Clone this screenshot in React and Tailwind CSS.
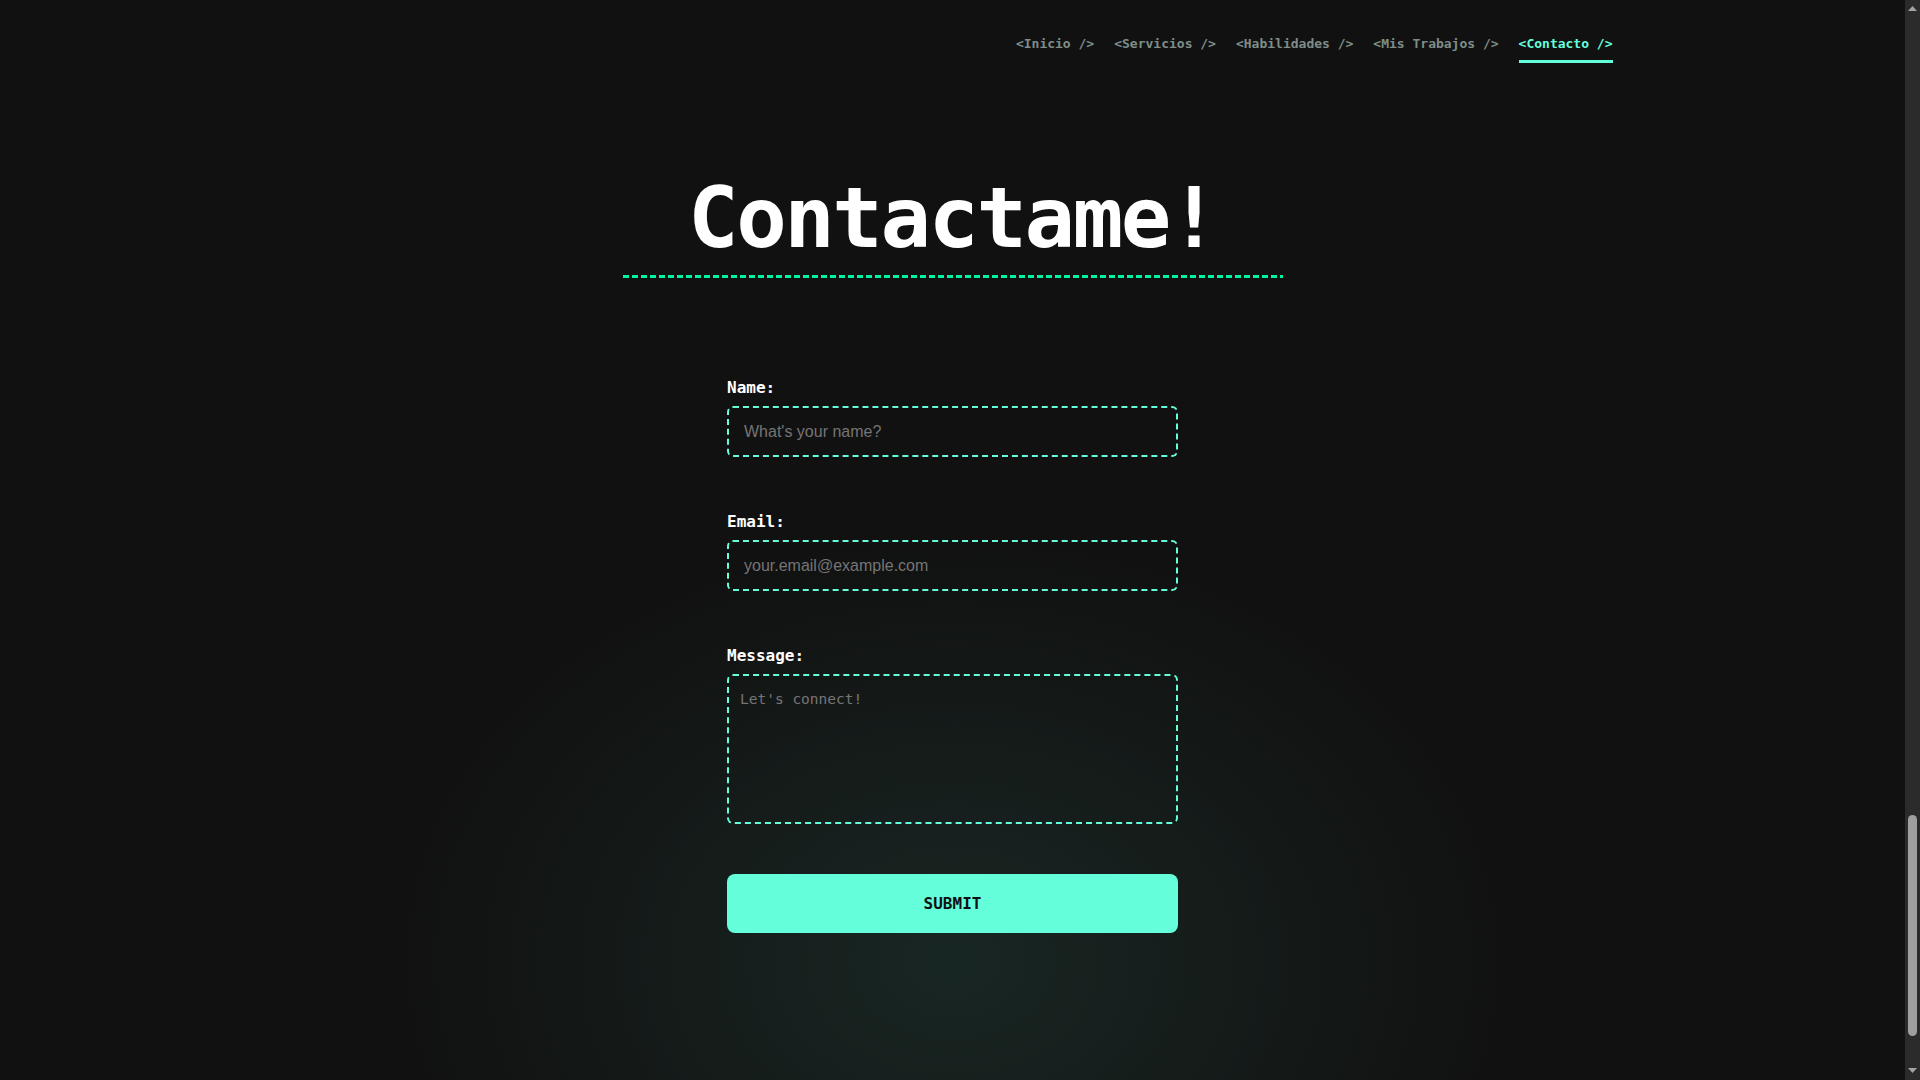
import React from 'react';

const mono = "font-['DejaVu_Sans_Mono','Liberation_Mono',monospace]";

const links = [
  { name: '<Inicio />', href: '#inicio' },
  { name: '<Servicios />', href: '#servicios' },
  { name: '<Habilidades />', href: '#habilidades' },
  { name: '<Mis Trabajos />', href: '#trabajos' },
  { name: '<Contacto />', href: '#contacto', active: true },
];

const Navbar = () => (
  <nav className="bg-[#111111]">
    <ul className={`max-w-[1320px] mx-auto flex justify-end gap-5 ${mono}`}>
      {links.map((link) => (
        <li key={link.name}>
          <a
            href={link.href}
            className={
              'block pt-[36px] pb-[8px] border-b-[3px] text-[13px] leading-[16px] font-bold whitespace-pre ' +
              (link.active
                ? 'text-[#64ffda] border-[#64ffda]'
                : 'text-[#7f8d89] border-transparent')
            }
          >
            {link.name}
          </a>
        </li>
      ))}
    </ul>
  </nav>
);

const Field = ({ label, children, className }) => (
  <div className={className}>
    <label className={`block pt-[2px] mb-[6px] text-white font-bold text-base leading-6 ${mono}`}>{label}</label>
    {children}
  </div>
);

const Contact = () => (
  <section id="contacto" className="pt-[113px]">
    <div className="w-[660px] mx-auto">
      <h1 className={`text-center text-white font-bold text-[84px] leading-[84px] tracking-[-2.5px] ${mono}`}>
        Contactame!
      </h1>
      <div className="mt-[15px] h-[3px] bg-[repeating-linear-gradient(90deg,#00f5a0_0_6px,transparent_6px_9px)]" />
    </div>

    <form className="w-[451px] mx-auto mt-[96px]" onSubmit={(e) => e.preventDefault()}>
      <Field label="Name:">
        <input
          type="text"
          placeholder="What's your name?"
          className="w-full h-[51px] px-[15px] rounded-md border-2 border-dashed border-[#64ffda] bg-transparent text-white text-base font-['Liberation_Sans',Arial,sans-serif] placeholder:text-[#757575] outline-none"
        />
      </Field>
      <Field label="Email:" className="mt-[51px]">
        <input
          type="email"
          placeholder="your.email@example.com"
          className="w-full h-[51px] px-[15px] rounded-md border-2 border-dashed border-[#64ffda] bg-transparent text-white text-base font-['Liberation_Sans',Arial,sans-serif] placeholder:text-[#757575] outline-none"
        />
      </Field>
      <Field label="Message:" className="mt-[51px]">
        <textarea
          placeholder="Let's connect!"
          className={`block w-full h-[150px] pt-[13px] px-[11px] rounded-md border-2 border-dashed border-[#64ffda] bg-transparent text-white text-[14.5px] resize-none placeholder:text-[#757575] outline-none ${mono}`}
        />
      </Field>
      <button
        type="submit"
        className={`mt-[50px] w-full h-[59px] rounded-lg bg-[#64ffda] text-[#111111] font-bold text-base ${mono}`}
      >
        SUBMIT
      </button>
    </form>
  </section>
);

// browser scrollbar, page scrolled near the bottom
const Scrollbar = () => (
  <div className="w-[15px] shrink-0 bg-[#2b2b2b] flex flex-col">
    <div className="h-[15px] flex items-start justify-center pt-[6px]">
      <svg width="9" height="5" viewBox="0 0 9 5">
        <path d="M4.5 0 L9 5 L0 5 Z" fill="#a3a3a3" />
      </svg>
    </div>
    <div className="flex-1" />
    <div className="w-[9px] h-[221px] mx-auto rounded-full bg-[#9f9f9f]" />
    <div className="h-[29px]" />
    <div className="h-[15px] flex items-start justify-center pt-[3px]">
      <svg width="9" height="5" viewBox="0 0 9 5">
        <path d="M0 0 L9 0 L4.5 5 Z" fill="#a3a3a3" />
      </svg>
    </div>
  </div>
);

export default function App() {
  return (
    <div className="h-screen flex overflow-hidden bg-[#111111]">
      <main className="flex-1 min-w-0 bg-[#111111] bg-[radial-gradient(ellipse_560px_430px_at_50%_89%,rgba(100,255,218,0.09),rgba(100,255,218,0))]">
        <Navbar />
        <Contact />
      </main>
      <Scrollbar />
    </div>
  );
}
